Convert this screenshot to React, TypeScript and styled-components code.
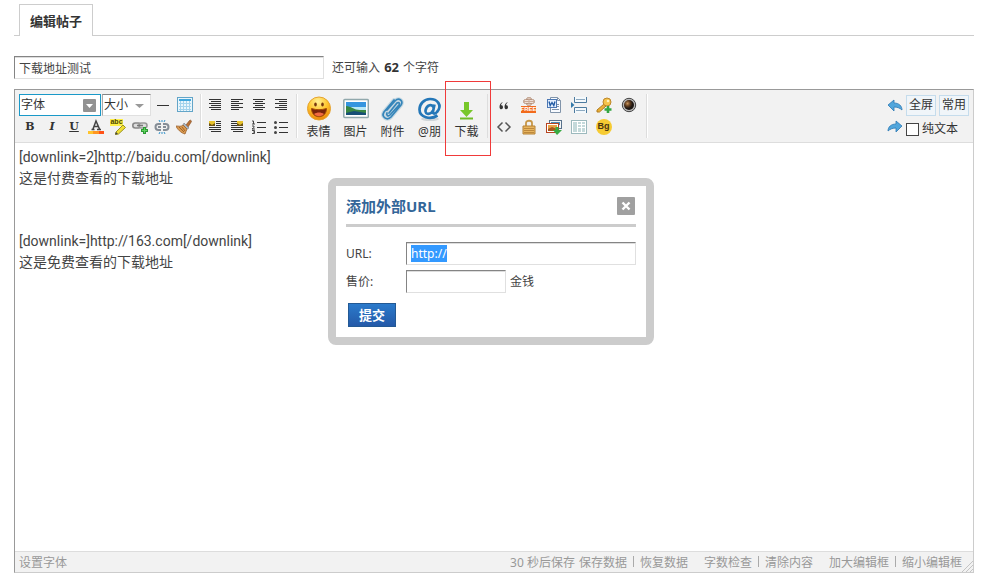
import React, { useEffect, useRef } from "react";
import styled, { createGlobalStyle } from "styled-components";

const latin = `"Noto Sans", "Noto Sans CJK SC", sans-serif`;

const GlobalStyle = createGlobalStyle`
  *, *::before, *::after { box-sizing: border-box; }
  html, body, #root { height: 100%; }
  body { margin: 0; background: #fff; color: #444; font: 12px/18px ${latin}; }
  input, button, select, textarea { font: inherit; color: inherit; margin: 0; }
  a { color: inherit; text-decoration: none; }
  svg { display: block; flex: none; }
`;

const Page = styled.main`
  display: flex;
  flex-direction: column;
  min-height: 100%;
  padding: 4px 16px 9px 14px;
`;

const TabBar = styled.nav`
  display: flex;
  flex: none;
  height: 32px;
  padding-left: 5px;
  border-bottom: 1px solid #cdcdcd;
`;

const Tab = styled.a`
  height: 32px;
  padding: 0 10px;
  border: 1px solid #cdcdcd;
  border-bottom: 0;
  background: #fff;
  color: #333;
  font-size: 13px;
  font-weight: 700;
  line-height: 32px;
`;

const TitleRow = styled.div`
  display: flex;
  align-items: center;
  gap: 8px;
  margin: 20px 0 10px;
`;

const Field = styled.input<{ $width?: string }>`
  width: ${(p) => p.$width ?? "100%"};
  height: 23px;
  padding: 0 4px;
  border: 1px solid;
  border-color: #848484 #e0e0e0 #e0e0e0 #848484;
  border-radius: 0;
  background: #fff;
  box-shadow: inset 0 1px 0 #ddd;
  outline: none;
  line-height: 16px;
  &::selection { background: #3399ff; color: #fff; }
`;

const Counter = styled.span`
  line-height: 20px;
  b { margin: 0 1px; color: #333; font-size: 13px; }
`;

const Editor = styled.section`
  position: relative;
  display: flex;
  flex: 1;
  flex-direction: column;
  border: 1px solid;
  border-color: #999 #ccc #ccc #999;
`;

const Toolbar = styled.div`
  display: flex;
  flex: none;
  height: 53px;
  padding: 4px;
  border-bottom: 1px solid #ddd;
  background: #f2f2f2;
`;

const Group = styled.div<{ $pad: number }>`
  display: flex;
  flex-direction: column;
  height: 44px;
  padding-right: ${(p) => p.$pad}px;
  margin-right: 3px;
  border-right: 1px solid #ddd;
  box-shadow: 1px 0 0 #fff;
`;

const Row = styled.div`
  display: flex;
  align-items: center;
  height: 22px;
`;

const ToolButton = styled.button<{ $width?: number }>`
  display: flex;
  align-items: center;
  justify-content: center;
  width: ${(p) => p.$width ?? 22}px;
  height: 22px;
  padding: 0;
  border: 0;
  background: none;
  cursor: pointer;
`;

const BigGroup = styled.div`
  display: flex;
  height: 44px;
  padding-right: 2px;
  margin-right: 3px;
  border-right: 1px solid #ddd;
`;

const BigButton = styled.button`
  display: flex;
  flex-direction: column;
  align-items: center;
  width: 37px;
  padding: 2px 0 0;
  border: 0;
  background: none;
  color: #333;
  line-height: 16px;
  white-space: nowrap;
  cursor: pointer;
  svg { margin-bottom: 2px; }
`;

const Highlighted = styled.div`
  position: relative;
  display: flex;
  &::after {
    content: "";
    position: absolute;
    top: -13px;
    left: -3px;
    width: 46px;
    height: 75px;
    border: 1px solid #f03a3a;
    pointer-events: none;
  }
`;

const SelectBox = styled.span<{ $width: number; $active?: boolean }>`
  display: grid;
  align-items: center;
  width: ${(p) => p.$width}px;
  height: 22px;
  margin-right: 1px;
  border: 1px solid;
  border-color: ${(p) => (p.$active ? "#1a99c8" : "#848484 #e0e0e0 #e0e0e0 #aaa")};
  background: #fff;
  > * { grid-area: 1 / 1; }
  svg { justify-self: end; margin-right: 4px; pointer-events: none; }
`;

const Select = styled.select`
  width: 100%;
  height: 20px;
  padding: 0 0 0 1px;
  border: 0;
  appearance: none;
  background: none;
  color: #333;
  outline: none;
`;

const RightTools = styled.div`
  display: flex;
  flex-direction: column;
  margin-left: auto;
`;

const BoxButton = styled.button`
  width: 30px;
  height: 21px;
  padding: 0;
  margin-right: 3px;
  border: 1px solid #c5dcec;
  background: #f0f5f9;
  color: #333;
  line-height: 18px;
  &:last-child { margin-right: 0; }
`;

const CheckLabel = styled.label`
  display: flex;
  align-items: center;
  gap: 3px;
  padding-top: 4px;
  color: #333;
`;

const Check = styled.input`
  width: 13px;
  height: 13px;
  appearance: none;
  border: 1px solid #444;
  background: #fff;
`;

const TextArea = styled.textarea`
  flex: 1;
  width: 100%;
  min-height: 300px;
  padding: 4px;
  border: 0;
  outline: none;
  resize: none;
  color: #444;
  font: 14px/21px Roboto, "Noto Sans CJK SC", sans-serif;
`;

const Footer = styled.footer`
  display: flex;
  flex: none;
  justify-content: space-between;
  height: 21px;
  padding-left: 4px;
  border-top: 1px solid #ddd;
  background: #f2f2f2;
  color: #999;
  line-height: 21px;
`;

const FooterLinks = styled.div`
  display: flex;
  gap: 16px;
`;

const LinkSet = styled.span`
  display: flex;
  a + a::before {
    content: "";
    display: inline-block;
    width: 1px;
    height: 11px;
    margin: 0 6px;
    background: #aaa;
  }
  span { margin-right: 4px; }
`;

const Grip = styled.svg`
  align-self: flex-end;
  margin-left: -16px;
`;

const Dialog = styled.form`
  position: absolute;
  top: 88px;
  left: 313px;
  width: 326px;
  padding: 10px;
  border: 8px solid #ccc;
  border-radius: 8px;
  background: #fff;
`;

const DialogHead = styled.header`
  display: flex;
  align-items: flex-start;
  justify-content: space-between;
  height: 31px;
  margin-bottom: 15px;
  border-bottom: 3px solid #ccc;
`;

const DialogTitle = styled.h3`
  margin: 0;
  color: #336699;
  font-size: 15px;
  line-height: 20px;
`;

const Close = styled.button`
  display: flex;
  align-items: center;
  justify-content: center;
  width: 18px;
  height: 18px;
  margin: 1px 1px 0 0;
  padding: 0;
  border: 0;
  border-radius: 1px;
  background: #a0a0a0;
`;

const FormRow = styled.div`
  display: flex;
  align-items: center;
  margin-bottom: 5px;
  label { flex: none; width: 60px; }
  span { margin-left: 4px; }
`;

const Submit = styled.button`
  display: block;
  width: 48px;
  height: 24px;
  margin: 10px 0 0 2px;
  padding: 0;
  border: 1px solid #235994;
  background: linear-gradient(#2b7acb, #2459a8);
  color: #fff;
  font-size: 13px;
  font-weight: 700;
  line-height: 20px;
`;

type IconProps = { children: React.ReactNode; w?: number; h?: number };
const Icon = ({ children, w = 16, h = 16 }: IconProps) => (
  <svg width={w} height={h} viewBox={`0 0 ${w} ${h}`} fill="none" aria-hidden="true">
    {children}
  </svg>
);

const Glyph = styled.span<{ $italic?: boolean; $underline?: boolean }>`
  color: #333;
  font: ${(p) => (p.$italic ? "italic " : "")}bold 11px/14px "DejaVu Serif", serif;
  text-decoration: ${(p) => (p.$underline ? "underline" : "none")};
`;

const lines = (rows: [number, number][]) => (
  <Icon>
    {rows.map(([x, w], i) => (
      <path key={i} d={`M${x} ${2.5 + i * 2}h${w}`} stroke="#333" strokeWidth="1" />
    ))}
  </Icon>
);

const indentIcon = (right: boolean) => (
  <Icon>
    <path d={right ? "M2 2.5h6M2 4.5h6M2 6.5h6" : "M9 2.5h5M9 4.5h5M9 6.5h5"} stroke="#333" />
    <path d="M2 8.5h12M2 10.5h12M4 12.5h10" stroke="#333" />
    <rect x={right ? 8 : 2} y="2" width="6" height="5" fill="#e8c32d" />
    <path d={right ? "M8 7V4l3 2 3-2v3z" : "M2 7V4l3 2 3-2v3z"} fill="#6d5414" />
  </Icon>
);

const TableIcon = () => (
  <Icon>
    <rect x=".5" y=".5" width="15" height="14" fill="#e9f6fc" stroke="#63a5c8" />
    <path d="M2 2h12v2H2z" fill="#42a7dc" />
    <path d="M3.5 4v10M6.5 4v10M9.5 4v10M12.5 4v10M2 6.5h12M2 9.5h12M2 12.5h12" stroke="#a4d3ec" />
  </Icon>
);

const ColorIcon = () => (
  <Icon>
    <path d="M3.5 10.5h3M9 10.5h4M5 10 8 2l3.5 8M6 7.5h4" stroke="#444" strokeWidth="1.5" />
    <path d="M0 12h16v3H0z" fill="#ffc52e" />
    <path d="M5 12h6v3H5z" fill="#ff9620" />
    <path d="M11 12h5v3h-5z" fill="#ff5218" />
  </Icon>
);

const MarkerLabel = styled.span`
  grid-area: 1 / 1;
  align-self: start;
  width: 13px;
  height: 7px;
  background: #fff04a;
  color: #4d4700;
  font: bold 7px/6px "Liberation Sans", sans-serif;
`;

const MarkerBox = styled.span`
  display: grid;
  svg { grid-area: 1 / 1; }
`;

const MarkerIcon = () => (
  <MarkerBox>
    <MarkerLabel>abc</MarkerLabel>
    <Icon>
      <path d="m6 13 7-7 2.5 2.500-7 6.500-3 .5z" fill="#f1df35" stroke="#9b9422" />
      <path d="m5 15.500 1-2.500 2 2z" fill="#444" />
    </Icon>
  </MarkerBox>
);

const LinkIcon = () => (
  <Icon>
    <rect x=".8" y="4" width="8" height="5" rx="2.500" fill="#ddd" stroke="#888" strokeWidth="1.600" />
    <rect x="7" y="4" width="8" height="5" rx="2.500" fill="#ddd" stroke="#999" strokeWidth="1.600" />
    <path d="M5 6.500h6" stroke="#777" strokeWidth="1.500" />
    <path d="M12.500 8v7M9 11.500h7" stroke="#2c9a35" strokeWidth="3" />
    <path d="M12.500 9v5M10 11.500h5" stroke="#62d35f" />
  </Icon>
);

const UnlinkIcon = () => (
  <Icon>
    <path d="M7 5H4.500a3 3 0 0 0 0 6H7M9 5h2.500a3 3 0 0 1 0 6H9M4 8h3M9 8h3" stroke="#858d96" strokeWidth="2" />
    <path d="M8 1v2M8 13v2M5 1l1 2M11 1l-1 2M5 15l1-2M11 15l-1-2" stroke="#3292cb" />
  </Icon>
);

const BrushIcon = () => (
  <Icon>
    <path d="m10 6 3.500-4.500c1-1 2.500.4 1.700 1.500L12 8z" fill="#bb7136" stroke="#875126" strokeWidth=".7" />
    <path d="m8 4 5 5-2 1-4-4z" fill="#aeb7bf" stroke="#747b83" strokeWidth=".6" />
    <path d="M7 6c-2 2-4 1-7 1 1 3 5 7 9 8 1-2 1-3 2-5z" fill="#d99a50" stroke="#99602c" strokeWidth=".8" />
    <path d="m3 8 5 5M6 8l3 4" stroke="#92571f" strokeWidth=".8" />
  </Icon>
);

const numbers = (
  <Icon>
    <path d="M6 3.500h9M6 8.500h9M6 13.500h9" stroke="#333" />
    <path d="M1 2h1.500v3M1 5h3M1 7h2v1.500L1 10h3M1 11.500h2.500v3H1M2 13h1" stroke="#333" strokeWidth=".9" />
  </Icon>
);

const bullets = (
  <Icon>
    <path d="M6 3.500h9M6 8.500h9M6 13.500h9" stroke="#333" />
    <circle cx="2.500" cy="3.500" r="1.500" fill="#444" />
    <circle cx="2.500" cy="8.500" r="1.500" fill="#444" />
    <circle cx="2.500" cy="13.500" r="1.500" fill="#444" />
  </Icon>
);

const SmileIcon = () => (
  <Icon w={26} h={26}>
    <defs>
      <radialGradient id="face" cx=".45" cy=".2" r=".85">
        <stop stopColor="#fff195" /><stop offset=".5" stopColor="#ffc52d" /><stop offset="1" stopColor="#e97d05" />
      </radialGradient>
    </defs>
    <circle cx="13" cy="12.500" r="11.500" fill="url(#face)" stroke="#e5a330" />
    <ellipse cx="9.500" cy="8.500" rx="1.300" ry="1.900" fill="#77370d" />
    <ellipse cx="16.500" cy="8.500" rx="1.300" ry="1.900" fill="#77370d" />
    <path d="M5.500 12.500c5 1.600 10 1.600 15 0 0 11-15 11-15 0z" fill="#79250b" stroke="#a64d07" />
    <path d="M8 18c3-2 7-2 10 0-3 3-7 3-10 0z" fill="#f16b42" />
  </Icon>
);

const PhotoIcon = () => (
  <Icon w={26} h={26}>
    <rect x=".8" y="3.500" width="24.500" height="18" rx="1" fill="#fff" stroke="#91a8ac" strokeWidth="1.500" />
    <path d="M3 6h20v13H3z" fill="#3595df" />
    <path d="M3 11h20v4H3z" fill="#b8e8f7" />
    <path d="M3 10c5 0 8 4 14 4h6v5H3z" fill="#398744" />
    <path d="m3 17 8-2 12 2v2H3z" fill="#174f76" />
  </Icon>
);

const ClipIcon = () => (
  <Icon w={26} h={26}>
    <path d="m7 14 8-9c4-4 9 0 6 4L11 21c-4 4-10 0-7-5L14 4M9 17l8-10c2-1 3 0 2 2l-9 10c-2 2-4 0-3-2" stroke="#c6d8e2" strokeWidth="4" strokeLinecap="round" />
    <path d="m7 14 8-9c4-4 9 0 6 4L11 21c-4 4-10 0-7-5L14 4M9 17l8-10c2-1 3 0 2 2l-9 10c-2 2-4 0-3-2" stroke="#3585ba" strokeWidth="1.700" strokeLinecap="round" />
  </Icon>
);

const AtIcon = () => (
  <Icon w={26} h={26}>
    <ellipse cx="13" cy="23" rx="9" ry="2" fill="#cfd5d8" />
    <path d="M17.500 8.500 16 15.500c-.7 3 2.500 2.500 4 .5C26 9 20 3 13 3 7 3 2.500 8 2.500 13.500c0 8 11 10.500 18 6M16.500 11.500c-1-4-7-3-8 3-.5 5 5.500 4 7.500 0" stroke="#2477b8" strokeWidth="2.700" />
  </Icon>
);

const DownloadIcon = () => (
  <Icon w={26} h={26}>
    <path d="M10 6h5v8h4l-6.500 7L6 14h4z" fill="#78c72a" />
    <path d="M6 21.500h13v2H6z" fill="#6fbd25" />
  </Icon>
);

const QuoteIcon = () => (
  <Icon>
    <path d="M7 5C4.500 5.600 3.500 8 3.500 10c0 3 3.500 3 3.500.3C7 8.500 6 8 5 8.200 5.200 7 6 6 7 5zm5 0c-2.500.6-3.500 3-3.500 5 0 3 3.500 3 3.500.3C12 8.500 11 8 10 8.200 10.200 7 11 6 12 5z" fill="#333" />
  </Icon>
);

const FreeLabel = styled.span`
  grid-area: 1 / 1;
  align-self: end;
  height: 7px;
  width: 15px;
  background: #f26b1c;
  color: #fff;
  font: bold 6px/7px "Liberation Sans", sans-serif;
`;

const FreeIcon = () => (
  <MarkerBox>
    <Icon>
      <rect x="5.500" y=".5" width="5" height="8" rx="2" fill="#eee0d6" stroke="#b7947f" />
      <rect x="2.500" y="2.500" width="11" height="4" rx="2" fill="#eee0d6" stroke="#b7947f" />
      <path d="M8 1v8M3 4.500h10" stroke="#c9aa97" />
    </Icon>
    <FreeLabel>FREE</FreeLabel>
  </MarkerBox>
);

const WordIcon = () => (
  <Icon>
    <path d="M4.500.5h7l3 3v12h-10z" fill="#f8fbff" stroke="#8194aa" />
    <path d="M11.500.5v3h3M11 7.500h2M11 9.500h2M6 12.500h7" stroke="#8194aa" />
    <rect x="1.500" y="2.500" width="9" height="8" fill="#e5f0ff" stroke="#4c78b4" />
    <path d="m3 4.500 1.200 4L6 5.500l1.800 3 1.200-4" stroke="#235da5" strokeWidth="1.400" />
  </Icon>
);

const PageBreakIcon = () => (
  <Icon>
    <path d="M3.500 0v5.500h12V0M3.500 16v-5.500h12V16" fill="#f4f9fc" stroke="#4d7b9f" />
    <path d="M5 2.500h9M5 13.500h9" stroke="#8daac1" />
    <path d="m0 5 3.500 3L0 11z" fill="#3379aa" />
  </Icon>
);

const KeyIcon = () => (
  <Icon>
    <path d="m8 7 2 2-6.500 6H1v-2z" fill="#e9af36" stroke="#b07b20" />
    <circle cx="11" cy="5" r="4" fill="#f5c34a" stroke="#bd872b" />
    <circle cx="12" cy="4" r="1.300" fill="#fff2bb" />
    <path d="M12 9v7M8.500 12.500h7" stroke="#34a642" strokeWidth="2.600" />
  </Icon>
);

const BallIcon = () => (
  <Icon>
    <defs><radialGradient id="ball" cx=".35" cy=".35"><stop stopColor="#c8935a" /><stop offset=".55" stopColor="#5d3b1e" /><stop offset="1" stopColor="#1e1713" /></radialGradient></defs>
    <circle cx="8" cy="8" r="6.700" fill="#bbb" stroke="#444" />
    <circle cx="8" cy="8" r="5" fill="url(#ball)" />
  </Icon>
);

const CodeIcon = () => (
  <Icon><path d="M6.500 3.500 2 8l4.500 4.500M9.500 3.500 14 8l-4.500 4.500" stroke="#555" strokeWidth="1.500" /></Icon>
);

const LockIcon = () => (
  <Icon>
    <path d="M5 7V4c0-3 6-3 6 0v3" stroke="#c79747" strokeWidth="1.800" />
    <path d="M2 7h12v8H2z" fill="#e8b55e" stroke="#b58135" />
    <path d="M3 9.500h10M3 11.500h10M3 13.500h10" stroke="#bd883d" />
  </Icon>
);

const SaveImageIcon = () => (
  <Icon>
    <rect x="3.500" y="1.500" width="12" height="8" fill="#f5f7f7" stroke="#58718b" />
    <path d="M5 3h9v3H5z" fill="#478bb5" />
    <rect x=".5" y="4.500" width="12" height="9" fill="#fff" stroke="#b64321" />
    <path d="M2 6h9v6H2z" fill="#e8a347" />
    <path d="m2 10 4-2 5 2v2H2z" fill="#a6561d" />
    <path d="M9.500 8h3v3H16l-5 5-4-5h2.500z" fill="#38ab42" />
  </Icon>
);

const ColumnsIcon = () => (
  <Icon>
    <rect x=".5" y="1.500" width="15" height="13" fill="#fff" stroke="#9cb9bd" />
    <path d="M2 3h4v10H2zM7 3h3v2H7zM7 6h3v2H7zM7 9h3v4H7zM11 3h3v2h-3zM11 6h3v2h-3zM11 9h3v4h-3z" fill="#c4d9da" />
  </Icon>
);

const BgIcon = styled.span`
  width: 16px;
  height: 16px;
  border-radius: 8px;
  background: #f6cb33;
  color: #4d3610;
  font: bold 9px/15px "Liberation Sans", sans-serif;
  text-align: center;
`;

const ArrowIcon = ({ redo = false }: { redo?: boolean }) => (
  <Icon>
    <path
      d={redo ? "M9 2v3C4 5 1 8 1 12c2-2 5-3 8-3v4l6-6z" : "M7 3v3c5 0 8 3 8 7-2-2-5-3-8-3v4L1 8z"}
      fill="#51a6dc" stroke="#2c78b4" strokeWidth=".8" strokeLinejoin="round"
    />
  </Icon>
);

const long = 12;
const alignments: [string, [number, number][]][] = [
  ["自动排版", [[2, long], [4, 10], [2, long], [4, 10], [2, long], [4, 10]]],
  ["居左", [[2, long], [2, 8], [2, long], [2, 8], [2, long], [2, 8]]],
  ["居中", [[2, long], [4, 8], [2, long], [4, 8], [2, long], [4, 8]]],
  ["居右", [[2, long], [6, 8], [2, long], [6, 8], [2, long], [6, 8]]],
];

const extrasTop: [string, React.ReactNode][] = [
  ["引用", <QuoteIcon />], ["免费信息", <FreeIcon />], ["Word", <WordIcon />],
  ["分页", <PageBreakIcon />], ["密码", <KeyIcon />], ["插件", <BallIcon />],
];
const extrasBottom: [string, React.ReactNode][] = [
  ["代码", <CodeIcon />], ["隐藏内容", <LockIcon />], ["远程图片", <SaveImageIcon />],
  ["目录", <ColumnsIcon />], ["背景", <BgIcon>Bg</BgIcon>],
];

const Tools = ({ items, width }: { items: [string, React.ReactNode][]; width?: number }) => (
  <Row>
    {items.map(([label, icon]) => (
      <ToolButton key={label} type="button" aria-label={label} $width={width}>{icon}</ToolButton>
    ))}
  </Row>
);

const content = `[downlink=2]http://baidu.com[/downlink]
这是付费查看的下载地址


[downlink=]http://163.com[/downlink]
这是免费查看的下载地址`;

export default function App() {
  const urlRef = useRef<HTMLInputElement>(null);
  useEffect(() => {
    urlRef.current?.focus();
    urlRef.current?.select();
  }, []);

  return (
    <>
      <GlobalStyle />
      <Page>
        <TabBar><Tab href="#edit">编辑帖子</Tab></TabBar>
        <TitleRow>
          <Field $width="310px" aria-label="标题" defaultValue="下载地址测试" />
          <Counter>还可输入 <b>62</b> 个字符</Counter>
        </TitleRow>
        <Editor>
          <Toolbar>
            <Group $pad={4}>
              <Row>
                <SelectBox $width={82} $active>
                  <Select aria-label="字体"><option>字体</option></Select>
                  <Icon w={13} h={13}>
                    <rect width="13" height="13" rx="1" fill="#929292" />
                    <path d="M3 5h7L6.500 9z" fill="#fff" />
                  </Icon>
                </SelectBox>
                <SelectBox $width={49}>
                  <Select aria-label="大小"><option>大小</option></Select>
                  <Icon w={13} h={13}><path d="M2 5h9L6.500 9z" fill="#999" /></Icon>
                </SelectBox>
                <ToolButton type="button" aria-label="分隔线">
                  <Icon><path d="M2 8.500h12" stroke="#333" /></Icon>
                </ToolButton>
                <ToolButton type="button" aria-label="表格"><TableIcon /></ToolButton>
              </Row>
              <Tools items={[
                ["粗体", <Glyph>B</Glyph>],
                ["斜体", <Glyph $italic>I</Glyph>],
                ["下划线", <Glyph $underline>U</Glyph>],
                ["颜色", <ColorIcon />],
                ["背景色", <MarkerIcon />],
                ["链接", <LinkIcon />],
                ["移除链接", <UnlinkIcon />],
                ["清除格式", <BrushIcon />],
              ]} />
            </Group>
            <Group $pad={4}>
              <Tools items={alignments.map(([label, rows]) => [label, lines(rows)])} />
              <Tools items={[
                ["左浮动", indentIcon(false)], ["右浮动", indentIcon(true)],
                ["编号列表", numbers], ["项目列表", bullets],
              ]} />
            </Group>
            <BigGroup>
              <BigButton type="button"><SmileIcon />表情</BigButton>
              <BigButton type="button"><PhotoIcon />图片</BigButton>
              <BigButton type="button"><ClipIcon />附件</BigButton>
              <BigButton type="button"><AtIcon />@朋</BigButton>
              <Highlighted><BigButton type="button"><DownloadIcon />下载</BigButton></Highlighted>
            </BigGroup>
            <Group $pad={5}>
              <Tools items={extrasTop} width={25} />
              <Tools items={extrasBottom} width={25} />
            </Group>
            <RightTools>
              <Row>
                <ToolButton type="button" aria-label="撤销"><ArrowIcon /></ToolButton>
                <BoxButton type="button">全屏</BoxButton>
                <BoxButton type="button">常用</BoxButton>
              </Row>
              <Row>
                <ToolButton type="button" aria-label="重做"><ArrowIcon redo /></ToolButton>
                <CheckLabel><Check type="checkbox" />纯文本</CheckLabel>
              </Row>
            </RightTools>
          </Toolbar>
          <TextArea aria-label="内容" defaultValue={content} spellCheck={false} />
          <Footer>
            <span>设置字体</span>
            <FooterLinks>
              <LinkSet><span>30 秒后保存</span><a href="#save">保存数据</a><a href="#restore">恢复数据</a></LinkSet>
              <LinkSet><a href="#count">字数检查</a><a href="#clear">清除内容</a></LinkSet>
              <LinkSet><a href="#grow">加大编辑框</a><a href="#shrink">缩小编辑框</a></LinkSet>
              <Grip width="11" height="11" viewBox="0 0 11 11" aria-hidden="true">
                <path d="M0 11 11 0M4 11l7-7M8 11l3-3" stroke="#c4c4c4" />
              </Grip>
            </FooterLinks>
          </Footer>
          <Dialog onSubmit={(e) => e.preventDefault()}>
            <DialogHead>
              <DialogTitle>添加外部URL</DialogTitle>
              <Close type="button" aria-label="关闭">
                <Icon w={10} h={10}><path d="m1.500 1.500 7 7M8.500 1.500l-7 7" stroke="#fff" strokeWidth="2.400" /></Icon>
              </Close>
            </DialogHead>
            <FormRow>
              <label htmlFor="url">URL:</label>
              <Field id="url" ref={urlRef} defaultValue="http://" />
            </FormRow>
            <FormRow>
              <label htmlFor="price">售价:</label>
              <Field id="price" $width="100px" />
              <span>金钱</span>
            </FormRow>
            <Submit type="submit">提交</Submit>
          </Dialog>
        </Editor>
      </Page>
    </>
  );
}
